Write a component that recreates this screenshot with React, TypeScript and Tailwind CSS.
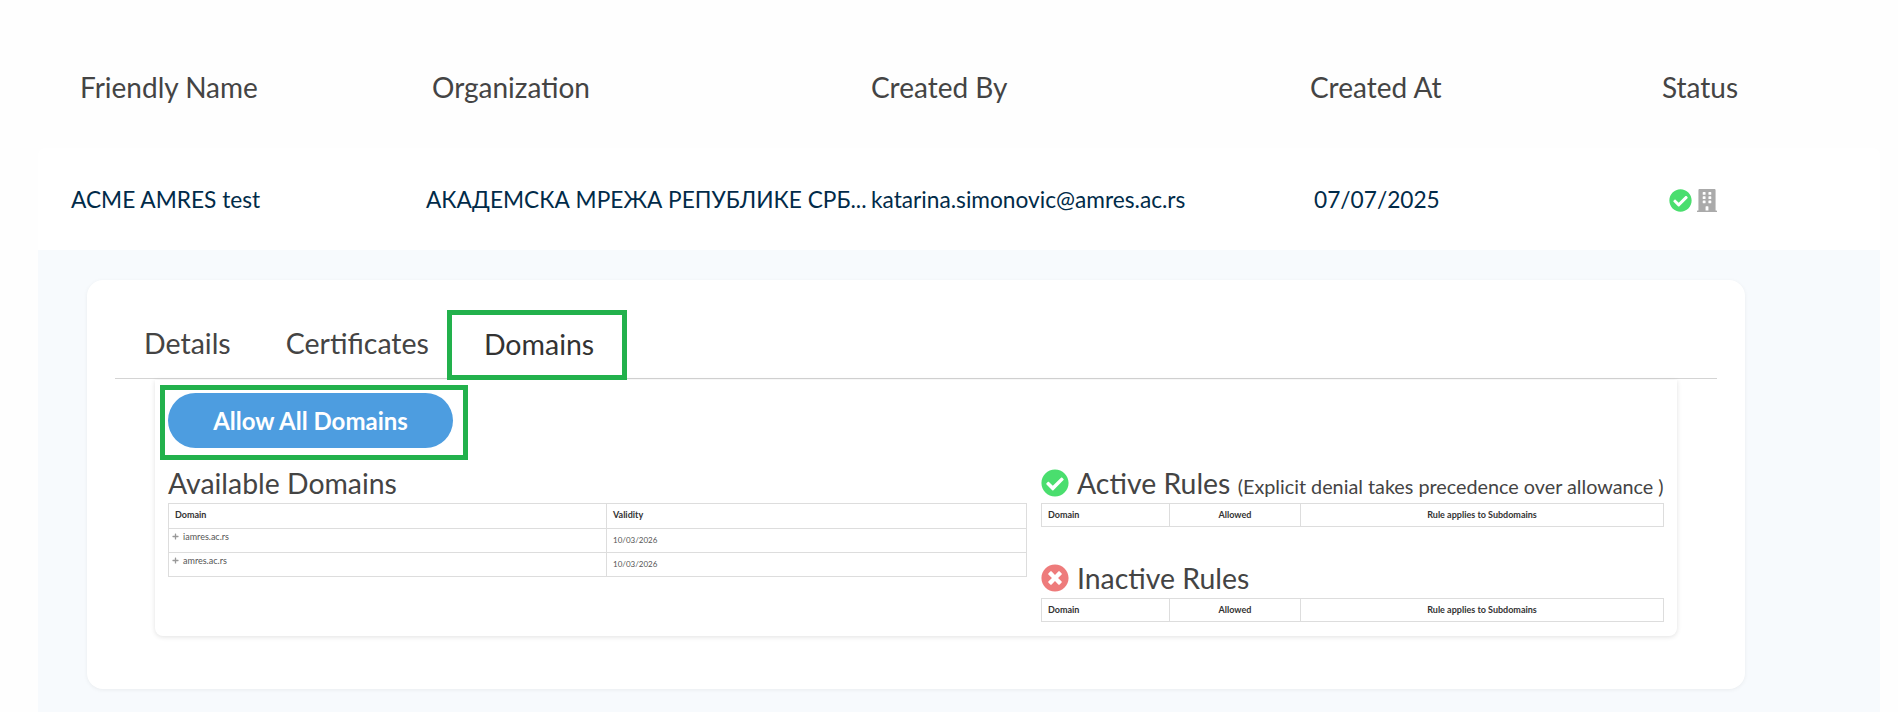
import { FaBuilding, FaCheckCircle, FaPlus, FaTimesCircle } from "react-icons/fa"

const domains = [
  { name: "iamres.ac.rs", validity: "10/03/2026" },
  { name: "amres.ac.rs", validity: "10/03/2026" },
]

const RulesTable = () => (
  <div className="grid h-6 w-full grid-cols-[127px_131px_1fr] border border-[#dddddd] text-[9px] font-bold leading-[22px] text-[#333333]">
    <div className="pl-[6px]">Domain</div>
    <div className="border-l border-[#dddddd] text-center">Allowed</div>
    <div className="border-l border-[#dddddd] text-center">Rule applies to Subdomains</div>
  </div>
)

export default function App() {
  return (
    <div className="h-[712px] overflow-hidden bg-[#fefefe] font-['Lato',sans-serif]">
      {/* table header */}
      <div className="ml-[38px] mr-[18px] grid h-[148px] grid-cols-[385px_448px_439px_352px_1fr] pt-[69px] text-[28px] leading-[36px] text-[#444444]">
        <div className="pl-[42px]">Friendly Name</div>
        <div className="pl-[9px]">Organization</div>
        <div>Created By</div>
        <div>Created At</div>
        <div>Status</div>
      </div>

      {/* row */}
      <div className="ml-[38px] mr-[18px] grid h-[102px] grid-cols-[385px_448px_439px_352px_1fr] items-center rounded-t-lg bg-white pt-[2px] text-[22.7px] text-[#012b49]">
        <div className="pl-[33px]">ACME AMRES test</div>
        <div className="whitespace-nowrap pl-[3px]">АКАДЕМСКА МРЕЖА РЕПУБЛИКЕ СРБ...</div>
        <div>katarina.simonovic@amres.ac.rs</div>
        <div className="pl-1">07/07/2025</div>
        <div className="flex items-center gap-[5px] pl-[7px]">
          <FaCheckCircle className="size-[23px] text-[#4ade6e]" />
          <FaBuilding className="h-[23px] w-5 text-[#aaaaaa]" />
        </div>
      </div>

      {/* expanded panel */}
      <div className="ml-[38px] mr-[18px] h-[462px] bg-[#f7fafd] pl-[49px] pr-[135px] pt-[30px]">
        <div className="h-[409px] rounded-2xl bg-white px-[28px] pt-[30px] shadow-[0_1px_4px_rgba(0,0,0,0.06)]">
          <div className="flex h-[69px] border-b border-[#d4d4d4] text-[28.5px] text-[#444444]">
            <div className="flex h-[66px] items-center pl-[29px] pr-[26px]">Details</div>
            <div className="flex h-[66px] items-center pl-[29px] pr-[18px]">Certificates</div>
            <div className="flex h-[70px] items-center border-[5px] border-[#22b14c] pb-[2px] pl-[32px] pr-[28px] text-[#333333]">Domains</div>
          </div>

          <div className="mx-[40px] mt-px h-[256px] rounded-b-lg bg-white pl-[5px] pr-[13px] pt-[5px] shadow-[0_1px_5px_rgba(0,0,0,0.12)]">
            <div className="w-fit border-[5px] border-[#22b14c] pb-[7px] pl-[3px] pr-[10px] pt-[3px]">
              <button className="flex h-[55px] w-[285px] items-center justify-center rounded-full bg-[#4d9de0] text-[24px] font-bold text-white">
                Allow All Domains
              </button>
            </div>

            <div className="mt-[9px] flex gap-[14px] pl-2">
              {/* available domains */}
              <div className="w-[859px] shrink-0">
                <h2 className="h-[34px] text-[28.4px] leading-[28px] text-[#444444]">Available Domains</h2>
                <div className="border border-[#dddddd] text-[9px] text-[#555555]">
                  <div className="grid h-6 grid-cols-[437px_1fr] font-bold leading-[22px] text-[#333333]">
                    <div className="pl-[6px]">Domain</div>
                    <div className="border-l border-[#dddddd] pl-[6px]">Validity</div>
                  </div>
                  {domains.map((domain) => (
                    <div key={domain.name} className="grid h-6 grid-cols-[437px_1fr] border-t border-[#dddddd]">
                      <div className="flex items-start gap-1 pl-[3px] pt-px leading-[13px]">
                        <FaPlus className="mt-[3px] size-[7px] text-[#999999]" />
                        {domain.name}
                      </div>
                      <div className="border-l border-[#dddddd] pl-[6px] text-[8px] leading-[22px]">{domain.validity}</div>
                    </div>
                  ))}
                </div>
              </div>

              {/* rules */}
              <div className="w-[623px] shrink-0">
                <div className="flex h-[34px] items-start gap-2 text-[#444444]">
                  <FaCheckCircle className="size-7 shrink-0 text-[#4ade6e]" />
                  <h2 className="whitespace-nowrap text-[28.4px] leading-[28px]">
                    Active Rules <span className="text-[19.8px]">(Explicit denial takes precedence over allowance )</span>
                  </h2>
                </div>
                <RulesTable />
                <div className="mt-[37px] flex h-[34px] items-start gap-2 text-[#444444]">
                  <FaTimesCircle className="size-7 shrink-0 text-[#ee7b7b]" />
                  <h2 className="text-[28.4px] leading-[28px]">Inactive Rules</h2>
                </div>
                <RulesTable />
              </div>
            </div>
          </div>
        </div>
      </div>
    </div>
  )
}
